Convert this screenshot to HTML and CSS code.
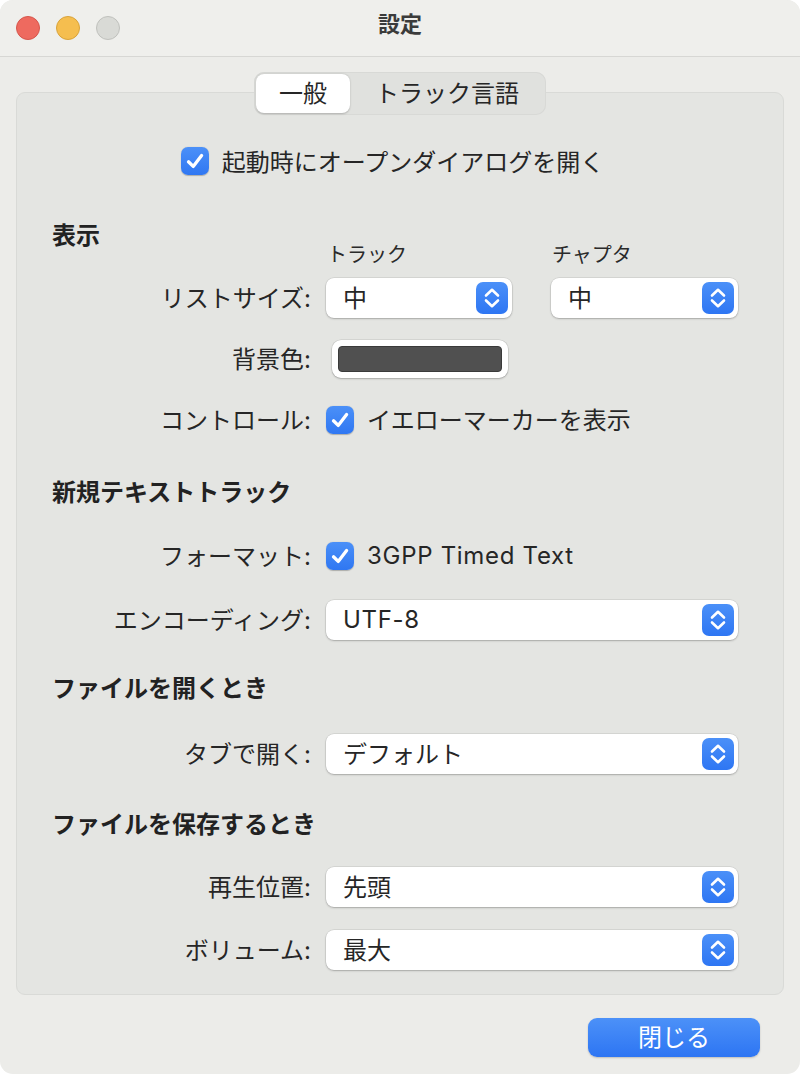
FILE: index.html
```html
<!DOCTYPE html>
<html lang="ja">
<head>
<meta charset="utf-8">
<title>設定</title>
<link rel="stylesheet" href="styles.css">
</head>
<body>
<div class="window">
  <header class="titlebar">
    <div class="lights">
      <span class="light red"></span>
      <span class="light yellow"></span>
      <span class="light gray"></span>
    </div>
    <div class="title">設定</div>
    <div></div>
  </header>
  <main class="content">
    <nav class="tabs">
      <span class="tab selected"><span class="txt">一般</span></span>
      <span class="tab"><span class="txt">トラック言語</span></span>
    </nav>
    <section class="box">
      <div class="startup">
        <span class="check"><svg viewBox="0 0 28 28" width="28" height="28"><path d="M7.5 14.8 L12.2 19.4 L20.6 8.6" fill="none" stroke="#fff" stroke-width="3.3" stroke-linecap="round" stroke-linejoin="round"/></svg></span>
        <span class="txt">起動時にオープンダイアログを開く</span>
      </div>

      <div class="row head-row mt-41">
        <h2 class="heading">表示</h2>
        <div class="colheads"><span>トラック</span><span>チャプタ</span></div>
      </div>
      <div class="row mt-14">
        <span class="label txt">リストサイズ:</span>
        <div class="pair">
          <div class="popup"><span class="txt">中</span><span class="stepper"><svg viewBox="0 0 32 32" width="32" height="32"><path d="M10 13.5 L16 7.8 L22 13.5 M10 18.5 L16 24.2 L22 18.5" fill="none" stroke="#fff" stroke-width="2.6" stroke-linecap="round" stroke-linejoin="round"/></svg></span></div>
          <div class="popup"><span class="txt">中</span><span class="stepper"><svg viewBox="0 0 32 32" width="32" height="32"><path d="M10 13.5 L16 7.8 L22 13.5 M10 18.5 L16 24.2 L22 18.5" fill="none" stroke="#fff" stroke-width="2.6" stroke-linecap="round" stroke-linejoin="round"/></svg></span></div>
        </div>
      </div>
      <div class="row mt-21">
        <span class="label txt">背景色:</span>
        <div class="well"><span class="swatch"></span></div>
      </div>
      <div class="row mt-21">
        <span class="label txt">コントロール:</span>
        <div class="checkrow">
          <span class="check"><svg viewBox="0 0 28 28" width="28" height="28"><path d="M7.5 14.8 L12.2 19.4 L20.6 8.6" fill="none" stroke="#fff" stroke-width="3.3" stroke-linecap="round" stroke-linejoin="round"/></svg></span>
          <span class="txt">イエローマーカーを表示</span>
        </div>
      </div>

      <h2 class="heading mt-39">新規テキストトラック</h2>
      <div class="row mt-29">
        <span class="label txt">フォーマット:</span>
        <div class="checkrow">
          <span class="check"><svg viewBox="0 0 28 28" width="28" height="28"><path d="M7.5 14.8 L12.2 19.4 L20.6 8.6" fill="none" stroke="#fff" stroke-width="3.3" stroke-linecap="round" stroke-linejoin="round"/></svg></span>
          <span class="txt latin">3GPP Timed Text</span>
        </div>
      </div>
      <div class="row mt-24">
        <span class="label txt">エンコーディング:</span>
        <div class="popup"><span class="txt latin">UTF-8</span><span class="stepper"><svg viewBox="0 0 32 32" width="32" height="32"><path d="M10 13.5 L16 7.8 L22 13.5 M10 18.5 L16 24.2 L22 18.5" fill="none" stroke="#fff" stroke-width="2.6" stroke-linecap="round" stroke-linejoin="round"/></svg></span></div>
      </div>

      <h2 class="heading mt-35">ファイルを開くとき</h2>
      <div class="row mt-31">
        <span class="label txt">タブで開く:</span>
        <div class="popup"><span class="txt">デフォルト</span><span class="stepper"><svg viewBox="0 0 32 32" width="32" height="32"><path d="M10 13.5 L16 7.8 L22 13.5 M10 18.5 L16 24.2 L22 18.5" fill="none" stroke="#fff" stroke-width="2.6" stroke-linecap="round" stroke-linejoin="round"/></svg></span></div>
      </div>

      <h2 class="heading mt-37">ファイルを保存するとき</h2>
      <div class="row mt-28">
        <span class="label txt">再生位置:</span>
        <div class="popup"><span class="txt">先頭</span><span class="stepper"><svg viewBox="0 0 32 32" width="32" height="32"><path d="M10 13.5 L16 7.8 L22 13.5 M10 18.5 L16 24.2 L22 18.5" fill="none" stroke="#fff" stroke-width="2.6" stroke-linecap="round" stroke-linejoin="round"/></svg></span></div>
      </div>
      <div class="row mt-23">
        <span class="label txt">ボリューム:</span>
        <div class="popup"><span class="txt">最大</span><span class="stepper"><svg viewBox="0 0 32 32" width="32" height="32"><path d="M10 13.5 L16 7.8 L22 13.5 M10 18.5 L16 24.2 L22 18.5" fill="none" stroke="#fff" stroke-width="2.6" stroke-linecap="round" stroke-linejoin="round"/></svg></span></div>
      </div>
    </section>
    <footer class="footer">
      <button class="primary"><span class="txt">閉じる</span></button>
    </footer>
  </main>
</div>
</body>
</html>
```

FILE: styles.css
```css
* { box-sizing: border-box; }

body {
  margin: 0;
  background: #ffffff;
  font-family: Inter, "Noto Sans CJK JP", sans-serif;
  color: #262626;
  font-size: 24px;
}

.window {
  width: 800px;
  height: 1074px;
  border-radius: 13px;
  background: #ecece9;
  overflow: hidden;
  display: flex;
  flex-direction: column;
}

.titlebar {
  height: 57px;
  border-bottom: 1px solid #d7d7d4;
  background: #efefec;
  display: grid;
  grid-template-columns: 1fr auto 1fr;
  align-items: center;
}

.lights {
  display: flex;
  gap: 16px;
  padding-left: 16px;
}

.light {
  width: 24px;
  height: 24px;
  border-radius: 50%;
  border: 1px solid;
}
.light.red { background: #ee6a5f; border-color: #d6564c; }
.light.yellow { background: #f5be4f; border-color: #d9a33a; }
.light.gray { background: #d9dad6; border-color: #c0c1bd; }

.title {
  font-weight: 700;
  font-size: 22px;
  color: #3b3b3b;
  margin-bottom: 12px;
}

/* nudge CJK glyphs up to match the reference's vertical centring */
.txt {
  padding-bottom: 4px;
}

.content {
  flex: 1;
  display: flex;
  flex-direction: column;
  padding: 15px 16px 0 16px;
}

.tabs {
  align-self: center;
  display: flex;
  height: 43px;
  padding: 2px;
  background: #e0e1de;
  border-radius: 10px;
  margin-bottom: -23px;
  position: relative;
  z-index: 1;
  box-shadow: inset 0 0 0 1px #d8d9d6;
}

.tab {
  display: flex;
  align-items: center;
  justify-content: center;
  height: 39px;
  font-size: 24px;
  color: #262626;
  width: 194px;
}

.tab .txt { padding-bottom: 5px; }

.tab.selected {
  width: 94px;
  background: #ffffff;
  border-radius: 8px;
  box-shadow: 0 0.5px 2px rgba(0,0,0,0.22);
}

.box {
  height: 903px;
  background: #e4e5e2;
  border: 1px solid #d9dad7;
  border-radius: 9px;
  padding: 48px 44px 24px 35px;
  display: flex;
  flex-direction: column;
}

.startup {
  height: 40px;
  display: flex;
  align-items: center;
  justify-content: center;
  gap: 13px;
  padding-right: 6px;
}

.startup .txt { padding-bottom: 2px; }

.check {
  width: 28px;
  height: 28px;
  border-radius: 7px;
  background: linear-gradient(#4b90f8, #2f77f2);
  box-shadow: 0 0.5px 1px rgba(0,0,0,0.25);
  display: flex;
  flex: none;
}

.row {
  display: grid;
  grid-template-columns: 259px 412px;
  column-gap: 15px;
  align-items: center;
  height: 40px;
}

.head-row {
  height: 42px;
  align-items: stretch;
}

.heading {
  margin: 0;
  font-size: 24px;
  font-weight: 700;
  color: #222;
  height: 28px;
  line-height: 28px;
}

.head-row .heading { align-self: start; }

.colheads {
  align-self: end;
  display: grid;
  grid-template-columns: 187px 187px;
  column-gap: 38px;
  font-size: 20px;
  line-height: 22px;
  color: #2a2a2a;
  padding-left: 1px;
  margin-bottom: -2px;
}

.label {
  text-align: right;
}

.latin {
  letter-spacing: 0.7px;
}

.txt.latin { padding-bottom: 1px; }

.pair {
  display: grid;
  grid-template-columns: 186px 187px;
  column-gap: 39px;
}

.popup {
  height: 40px;
  background: #ffffff;
  border-radius: 8px;
  box-shadow: 0 0 0 0.5px rgba(0,0,0,0.12), 0 1px 2px rgba(0,0,0,0.22);
  display: flex;
  align-items: center;
  justify-content: space-between;
  padding: 0 4px 0 17px;
}

.stepper {
  width: 32px;
  height: 32px;
  border-radius: 7px;
  background: linear-gradient(#4b90f8, #2e76f3);
  display: flex;
}

.well {
  width: 176px;
  height: 38px;
  margin-left: 6px;
  background: #ffffff;
  border-radius: 9px;
  box-shadow: 0 0 0 0.5px rgba(0,0,0,0.12), 0 1px 2px rgba(0,0,0,0.22);
  padding: 6px;
  display: flex;
}

.swatch {
  flex: 1;
  background: #505050;
  border: 1px solid #3a3a3a;
  border-radius: 4px;
}

.checkrow {
  display: flex;
  align-items: center;
  gap: 13px;
}

.mt-14 { margin-top: 14px; }
.mt-21 { margin-top: 21px; }
.mt-23 { margin-top: 23px; }
.mt-24 { margin-top: 24px; }
.mt-28 { margin-top: 28px; }
.mt-29 { margin-top: 29px; }
.mt-31 { margin-top: 31px; }
.mt-35 { margin-top: 35px; }
.mt-37 { margin-top: 37px; }
.mt-39 { margin-top: 39px; }
.mt-41 { margin-top: 41px; }

.footer {
  display: flex;
  justify-content: flex-end;
  padding: 23px 24px 0 0;
}

.primary {
  width: 172px;
  height: 39px;
  border: none;
  border-radius: 9px;
  background: linear-gradient(#4c91f8, #2d75f3);
  color: #ffffff;
  font-family: Inter, "Noto Sans CJK JP", sans-serif;
  font-size: 24px;
  box-shadow: 0 1px 2px rgba(0,0,0,0.2);
  padding: 0;
  display: flex;
  align-items: center;
  justify-content: center;
}

.primary .txt { padding-bottom: 5px; }
```
